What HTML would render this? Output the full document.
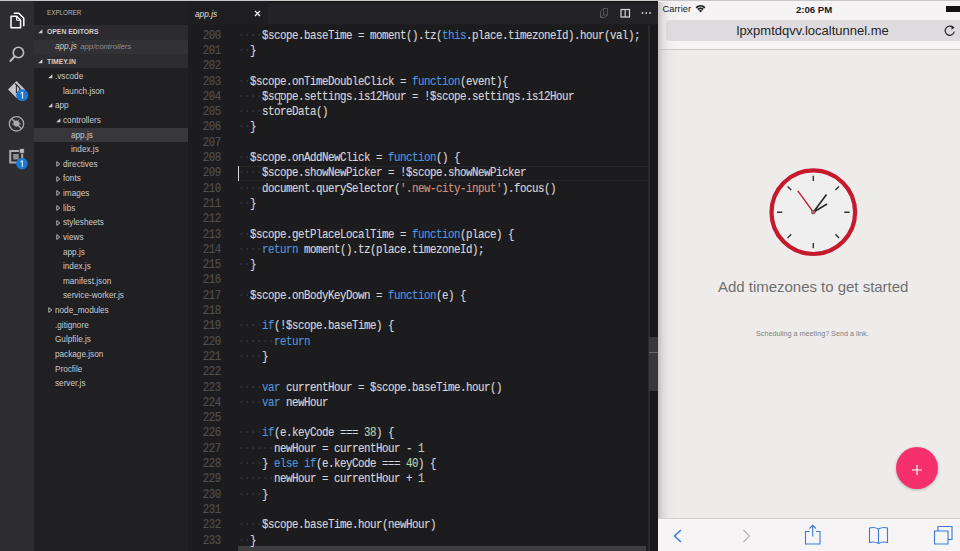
<!DOCTYPE html>
<html><head><meta charset="utf-8">
<style>
*{margin:0;padding:0;box-sizing:border-box}
html,body{width:960px;height:551px;overflow:hidden;background:#1e1e20;font-family:"Liberation Sans",sans-serif}
.a{position:absolute}
#top{left:0;top:0;width:960px;height:1.2px;background:#c8c7c7}
#act{left:0;top:1.2px;width:34px;height:549.5px;background:#2d2c2f}
#side{left:34px;top:1.2px;width:154px;height:549.5px;background:#201f22}
#oe{left:34px;top:24.8px;width:154px;height:15.2px;background:#2b2a2e}
#oei{left:34px;top:40px;width:154px;height:13.6px;background:#323136}
#th{left:34px;top:53.6px;width:154px;height:14.7px;background:#2d2c30}
#sel{left:34px;top:127.5px;width:154px;height:14.5px;background:#38373b}
#tabs{left:188px;top:1.2px;width:470px;height:23.3px;background:#232226}
#tab{left:188px;top:1.2px;width:79px;height:23.3px;background:#1e1d20}
#ed{left:188px;top:24.5px;width:470px;height:527px;background:#1c1b1e}
#vs{left:648px;top:24.5px;width:10px;height:527px;background:#19181b;border-left:2px solid #2a292c}
#vthumb{left:648.5px;top:337px;width:9.5px;height:54px;background:#38373a}
#vline{left:648.5px;top:351.5px;width:9.5px;height:1.5px;background:#67666a}
#hthumb{left:238px;top:545.5px;width:407.5px;height:6px;background:#3d3c40}
#ios{left:658px;top:1.2px;width:302px;height:549.5px;background:#eeeceb}
#ios-shadow{left:658px;top:2px;width:20px;height:549px;background:linear-gradient(90deg,rgba(180,178,178,0.75) 0,rgba(200,198,198,0.45) 5px,rgba(215,213,213,0.2) 11px,rgba(235,233,232,0) 20px)}
#status{left:658px;top:1.2px;width:302px;height:48.5px;background:#f5f3f4;border-bottom:1px solid #c9c8c9}
#url{left:666px;top:20px;width:294px;height:21px;background:#dddbde;border-radius:4px 0 0 4px}
#bar{left:658px;top:518px;width:302px;height:33px;background:#f6f4f5;border-top:1px solid #d3d1d1}
.st{position:absolute;font-size:8.2px;color:#cbcbcb;white-space:nowrap;line-height:normal}
.tri-d{position:absolute;width:0;height:0;border-left:4px solid transparent;border-bottom:4px solid #c8c8c8}
.tri-r{position:absolute;width:0;height:0;border-top:3px solid transparent;border-bottom:3px solid transparent;border-left:3.5px solid #c8c8c8}
.hd{position:absolute;font-size:7.2px;font-weight:bold;color:#cfcfcf;white-space:nowrap;letter-spacing:0;transform:scaleX(0.95);transform-origin:0 0}
.code{position:absolute;left:238px;font-family:"Liberation Mono",monospace;font-size:10.8px;letter-spacing:-0.48px;color:#d4d4d4;white-space:pre;line-height:13.661px;height:15px;-webkit-text-stroke:0.15px currentColor;transform:scaleY(1.1);transform-origin:0 0}
.ln{position:absolute;left:186.3px;width:34.5px;text-align:right;font-family:"Liberation Mono",monospace;font-size:10.8px;letter-spacing:-0.48px;color:#4f4f4f;line-height:13.661px;height:15px;-webkit-text-stroke:0.15px currentColor;transform:scaleY(1.1);transform-origin:0 0}
.k{color:#4f94d8}.s{color:#ce9178}.n{color:#b5cea8}.w{color:#3a3a3a;-webkit-text-stroke:0}
</style></head><body>
<div class="a" id="top"></div>
<div class="a" id="act"></div>
<div class="a" id="side"></div>
<div class="a" id="oe"></div>
<div class="a" id="oei"></div>
<div class="a" id="th"></div>
<div class="a" id="sel"></div>
<div class="a" id="tabs"></div>
<div class="a" id="tab"></div>
<div class="a" style="left:267px;top:1.2px;width:391px;height:2px;background:#19181b"></div>
<div class="a" style="left:267px;top:4px;width:1px;height:20px;background:#1f1e21"></div>
<div class="a" id="ed"></div>
<div class="a" id="vs"></div>
<div class="a" id="vthumb"></div>
<div class="a" id="vline"></div>
<div class="a" id="hthumb"></div>
<div class="a" id="ios"></div>
<div class="a" id="status"></div>
<div class="a" id="url"></div>
<div class="a" id="ios-shadow"></div>
<div class="a" id="bar"></div>

<!-- activity bar icons -->
<svg class="a" style="left:0;top:2px" width="34" height="180" viewBox="0 2 34 180">
  <!-- files -->
  <g fill="none" stroke="#ffffff" stroke-width="1.5" stroke-linejoin="round">
    <path d="M13.8 13.2 h5 l5 5 v8" />
    <path d="M11 16.2 h5.6 l4 4 v7.6 h-9.6 z" />
    <path d="M16.6 16.2 v4 h4" stroke-width="1"/>
  </g>
  <!-- search -->
  <g fill="none" stroke="#bdbdbd" stroke-width="1.6">
    <circle cx="18.4" cy="52.5" r="5.2"/>
    <path d="M14.8 56.2 L9.8 61.6" stroke-width="2"/>
  </g>
  <!-- git -->
  <path d="M16.5 81 L25 89.5 L16.5 98 L8 89.5 Z" fill="#c4c4c4"/>
  <path d="M15.2 83.5 L19.8 88.1 M16.4 84.5 V93" stroke="#2d2c2f" stroke-width="1.1"/><circle cx="19.8" cy="89" r="1" fill="#2d2c2f"/>
  <circle cx="22.2" cy="95.2" r="6" fill="#1a7ad8"/>
  <path d="M20.6 93.4 L22.6 92 V98.6" fill="none" stroke="#fff" stroke-width="1"/>
  <!-- debug -->
  <g fill="none" stroke="#a9a9a9" stroke-width="1.3">
    <circle cx="16.5" cy="123.8" r="7.2"/>
    <path d="M11.5 118.8 L21.5 128.8"/>
  </g>
  <path d="M13.5 122.5 q3-4 6 0 v2.5 q-3 3.5-6 0z" fill="#a9a9a9"/>
  <path d="M14 119.5 l1.2 1.5 M19 119.5 l-1.2 1.5 M12 124 h1.5 M19.5 124 h1.5" stroke="#a9a9a9" stroke-width="0.9"/>
  <!-- extensions -->
  <path d="M10.2 151 h12 v11.5 h-12 z" fill="none" stroke="#ababab" stroke-width="2"/>
  <rect x="13.2" y="154" width="5.5" height="5.5" fill="#8f8f8f"/>
  <rect x="19.5" y="148.5" width="4.8" height="4.8" fill="#bdbdbd" stroke="#2d2c2f" stroke-width="0.8"/>
  <circle cx="21.9" cy="163.6" r="5.8" fill="#1a7ad8"/>
  <path d="M20.4 162 L22.3 160.6 V166.9" fill="none" stroke="#fff" stroke-width="1"/>
</svg>

<!-- sidebar headers -->
<div class="hd" style="left:46.5px;top:8.2px;font-weight:normal;color:#bcbcbc;font-size:7.6px;letter-spacing:0;transform:scaleX(0.83);transform-origin:0 0">EXPLORER</div>
<svg class="a" style="left:38.3px;top:29.2px" width="5" height="5"><path d="M4.4 0.2 V4.3 H0.2 Z" fill="#d0d0d0"/></svg>
<div class="hd" style="left:46.7px;top:27.1px">OPEN EDITORS</div>
<div class="st" style="left:55px;top:42.4px;font-style:italic;color:#c9c9c9">app.js <span style="color:#8d8d8f;font-size:7.8px;margin-left:1px">app/controllers</span></div>
<svg class="a" style="left:38.3px;top:58.7px" width="5" height="5"><path d="M4.4 0.2 V4.3 H0.2 Z" fill="#d0d0d0"/></svg>
<div class="hd" style="left:46.7px;top:56.9px">TIMEY.IN</div>
<div class="st" style="left:55px;top:71.98px">.vscode</div>
<svg class="a" style="left:47.70px;top:74.20px" width="5" height="5"><path d="M4.4 0.2 V4.3 H0.2 Z" fill="#d0d0d0"/></svg>
<div class="st" style="left:63px;top:86.61px">launch.json</div>
<div class="st" style="left:55px;top:101.24px">app</div>
<svg class="a" style="left:47.70px;top:103.46px" width="5" height="5"><path d="M4.4 0.2 V4.3 H0.2 Z" fill="#d0d0d0"/></svg>
<div class="st" style="left:63px;top:115.87px">controllers</div>
<svg class="a" style="left:55.70px;top:118.09px" width="5" height="5"><path d="M4.4 0.2 V4.3 H0.2 Z" fill="#d0d0d0"/></svg>
<div class="st" style="left:71px;top:130.50px">app.js</div>
<div class="st" style="left:71px;top:145.13px">index.js</div>
<div class="st" style="left:63px;top:159.76px">directives</div>
<svg class="a" style="left:55.70px;top:161.18px" width="5" height="6"><path d="M0.8 0.6 L3.8 3 L0.8 5.4 Z" fill="none" stroke="#c4c4c4" stroke-width="0.9"/></svg>
<div class="st" style="left:63px;top:174.39px">fonts</div>
<svg class="a" style="left:55.70px;top:175.81px" width="5" height="6"><path d="M0.8 0.6 L3.8 3 L0.8 5.4 Z" fill="none" stroke="#c4c4c4" stroke-width="0.9"/></svg>
<div class="st" style="left:63px;top:189.02px">images</div>
<svg class="a" style="left:55.70px;top:190.44px" width="5" height="6"><path d="M0.8 0.6 L3.8 3 L0.8 5.4 Z" fill="none" stroke="#c4c4c4" stroke-width="0.9"/></svg>
<div class="st" style="left:63px;top:203.65px">libs</div>
<svg class="a" style="left:55.70px;top:205.07px" width="5" height="6"><path d="M0.8 0.6 L3.8 3 L0.8 5.4 Z" fill="none" stroke="#c4c4c4" stroke-width="0.9"/></svg>
<div class="st" style="left:63px;top:218.28px">stylesheets</div>
<svg class="a" style="left:55.70px;top:219.70px" width="5" height="6"><path d="M0.8 0.6 L3.8 3 L0.8 5.4 Z" fill="none" stroke="#c4c4c4" stroke-width="0.9"/></svg>
<div class="st" style="left:63px;top:232.91px">views</div>
<svg class="a" style="left:55.70px;top:234.33px" width="5" height="6"><path d="M0.8 0.6 L3.8 3 L0.8 5.4 Z" fill="none" stroke="#c4c4c4" stroke-width="0.9"/></svg>
<div class="st" style="left:63px;top:247.54px">app.js</div>
<div class="st" style="left:63px;top:262.17px">index.js</div>
<div class="st" style="left:63px;top:276.80px">manifest.json</div>
<div class="st" style="left:63px;top:291.43px">service-worker.js</div>
<div class="st" style="left:55px;top:306.06px">node_modules</div>
<svg class="a" style="left:47.70px;top:307.48px" width="5" height="6"><path d="M0.8 0.6 L3.8 3 L0.8 5.4 Z" fill="none" stroke="#c4c4c4" stroke-width="0.9"/></svg>
<div class="st" style="left:55px;top:320.69px">.gitignore</div>
<div class="st" style="left:55px;top:335.32px">Gulpfile.js</div>
<div class="st" style="left:55px;top:349.95px">package.json</div>
<div class="st" style="left:55px;top:364.58px">Procfile</div>
<div class="st" style="left:55px;top:379.21px">server.js</div>

<!-- tab -->
<div class="st" style="left:195px;top:8.7px;font-style:italic;font-size:8.3px;color:#e0e0e0">app.js</div>
<svg class="a" style="left:254px;top:10px" width="7" height="7"><path d="M1 1 L6 6 M6 1 L1 6" stroke="#f0f0f0" stroke-width="1.3"/></svg>
<!-- editor actions -->
<svg class="a" style="left:598px;top:6px" width="60" height="14" viewBox="598 6 60 14">
  <path d="M600.5 11 l3-2.5 h4 v6.5 l-3 2.5 h-4z M603.5 8.5 v6.5 l-3 2.5 M603.5 15 h4" fill="none" stroke="#5a5a5a" stroke-width="0.9"/>
  <rect x="621" y="9.5" width="8.5" height="7.5" fill="none" stroke="#d5d5d5" stroke-width="1.2"/>
  <path d="M625.2 9.5 v7.5" stroke="#d5d5d5" stroke-width="1.2"/>
  <circle cx="642.5" cy="13" r="0.9" fill="#d0d0d0"/><circle cx="646.3" cy="13" r="0.9" fill="#d0d0d0"/><circle cx="650" cy="13" r="0.9" fill="#d0d0d0"/>
</svg>

<!-- cursor line -->
<div class="a" style="left:239px;top:165.5px;width:409px;height:15.3px;border-top:1px solid #262528;border-bottom:1px solid #262528"></div>
<div class="a" style="left:238px;top:165.5px;width:1.3px;height:15.3px;background:#d8d8d8"></div>

<div class="ln" style="top:28.60px">200</div>
<div class="ln" style="top:43.90px">201</div>
<div class="ln" style="top:59.20px">202</div>
<div class="ln" style="top:74.50px">203</div>
<div class="ln" style="top:89.80px">204</div>
<div class="ln" style="top:105.10px">205</div>
<div class="ln" style="top:120.40px">206</div>
<div class="ln" style="top:135.70px">207</div>
<div class="ln" style="top:151.00px">208</div>
<div class="ln" style="top:166.30px">209</div>
<div class="ln" style="top:181.60px">210</div>
<div class="ln" style="top:196.90px">211</div>
<div class="ln" style="top:212.20px">212</div>
<div class="ln" style="top:227.50px">213</div>
<div class="ln" style="top:242.80px">214</div>
<div class="ln" style="top:258.10px">215</div>
<div class="ln" style="top:273.40px">216</div>
<div class="ln" style="top:288.70px">217</div>
<div class="ln" style="top:304.00px">218</div>
<div class="ln" style="top:319.30px">219</div>
<div class="ln" style="top:334.60px">220</div>
<div class="ln" style="top:349.90px">221</div>
<div class="ln" style="top:365.20px">222</div>
<div class="ln" style="top:380.50px">223</div>
<div class="ln" style="top:395.80px">224</div>
<div class="ln" style="top:411.10px">225</div>
<div class="ln" style="top:426.40px">226</div>
<div class="ln" style="top:441.70px">227</div>
<div class="ln" style="top:457.00px">228</div>
<div class="ln" style="top:472.30px">229</div>
<div class="ln" style="top:487.60px">230</div>
<div class="ln" style="top:502.90px">231</div>
<div class="ln" style="top:518.20px">232</div>
<div class="ln" style="top:533.50px">233</div>

<div class="code" style="top:28.60px"><span class="w">····</span>$scope.baseTime = moment().tz(<span class="k">this</span>.place.timezoneId).hour(val);</div>
<div class="code" style="top:43.90px"><span class="w">··</span>}</div>
<div class="code" style="top:59.20px"> </div>
<div class="code" style="top:74.50px"><span class="w">··</span>$scope.onTimeDoubleClick = <span class="k">function</span>(event){</div>
<div class="code" style="top:89.80px"><span class="w">····</span>$scope.settings.is12Hour = !$scope.settings.is12Hour</div>
<div class="code" style="top:105.10px"><span class="w">····</span>storeData()</div>
<div class="code" style="top:120.40px"><span class="w">··</span>}</div>
<div class="code" style="top:135.70px"> </div>
<div class="code" style="top:151.00px"><span class="w">··</span>$scope.onAddNewClick = <span class="k">function</span>() {</div>
<div class="code" style="top:166.30px"><span class="w">····</span>$scope.showNewPicker = !$scope.showNewPicker</div>
<div class="code" style="top:181.60px"><span class="w">····</span>document.querySelector(<span class="s">'.new-city-input'</span>).focus()</div>
<div class="code" style="top:196.90px"><span class="w">··</span>}</div>
<div class="code" style="top:212.20px"> </div>
<div class="code" style="top:227.50px"><span class="w">··</span>$scope.getPlaceLocalTime = <span class="k">function</span>(place) {</div>
<div class="code" style="top:242.80px"><span class="w">····</span><span class="k">return</span> moment().tz(place.timezoneId);</div>
<div class="code" style="top:258.10px"><span class="w">··</span>}</div>
<div class="code" style="top:273.40px"> </div>
<div class="code" style="top:288.70px"><span class="w">··</span>$scope.onBodyKeyDown = <span class="k">function</span>(e) {</div>
<div class="code" style="top:304.00px"> </div>
<div class="code" style="top:319.30px"><span class="w">····</span><span class="k">if</span>(!$scope.baseTime) {</div>
<div class="code" style="top:334.60px"><span class="w">······</span><span class="k">return</span></div>
<div class="code" style="top:349.90px"><span class="w">····</span>}</div>
<div class="code" style="top:365.20px"> </div>
<div class="code" style="top:380.50px"><span class="w">····</span><span class="k">var</span> currentHour = $scope.baseTime.hour()</div>
<div class="code" style="top:395.80px"><span class="w">····</span><span class="k">var</span> newHour</div>
<div class="code" style="top:411.10px"> </div>
<div class="code" style="top:426.40px"><span class="w">····</span><span class="k">if</span>(e.keyCode === <span class="n">38</span>) {</div>
<div class="code" style="top:441.70px"><span class="w">······</span>newHour = currentHour - <span class="n">1</span></div>
<div class="code" style="top:457.00px"><span class="w">····</span>} <span class="k">else if</span>(e.keyCode === <span class="n">40</span>) {</div>
<div class="code" style="top:472.30px"><span class="w">······</span>newHour = currentHour + <span class="n">1</span></div>
<div class="code" style="top:487.60px"><span class="w">····</span>}</div>
<div class="code" style="top:502.90px"> </div>
<div class="code" style="top:518.20px"><span class="w">····</span>$scope.baseTime.hour(newHour)</div>
<div class="code" style="top:533.50px"><span class="w">··</span>}</div>

<!-- I-beam mouse cursor -->
<svg class="a" style="left:276px;top:92px;z-index:5" width="9" height="14"><path d="M1.5 1.5 h4.5 M3.75 1.5 v10.5 M1.5 12 h4.5" stroke="#111" stroke-width="2.2"/><path d="M1.5 1.5 h4.5 M3.75 1.5 v10.5 M1.5 12 h4.5" stroke="#dcdcdc" stroke-width="1"/></svg>

<!-- iOS status -->
<div class="st" style="left:662.6px;top:4.2px;font-size:9.3px;color:#222">Carrier</div>
<svg class="a" style="left:695px;top:4px" width="11" height="9" viewBox="0 0 11 9">
  <path d="M5.5 8.5 L0.5 3 A7.5 7.5 0 0 1 10.5 3 Z" fill="#1e1e1e"/>
  <path d="M2.1 4.6 A5 5 0 0 1 8.9 4.6" fill="none" stroke="#f5f3f4" stroke-width="0.9"/>
  <path d="M3.6 6.3 A3 3 0 0 1 7.4 6.3" fill="none" stroke="#f5f3f4" stroke-width="0.9"/>
</svg>
<div class="st" style="left:796px;top:3.5px;font-size:9.6px;font-weight:bold;color:#1a1a1a">2:06 PM</div>
<div class="a" style="left:946px;top:5.5px;width:14px;height:6.5px;background:#111"></div>
<div class="st" style="left:736.5px;top:22.5px;font-size:13px;color:#262626">lpxpmtdqvv.localtunnel.me</div>
<svg class="a" style="left:943px;top:23px" width="14" height="14" viewBox="0 0 14 14">
  <path d="M10.5 5 A4.6 4.6 0 1 0 11.3 8.5" fill="none" stroke="#2a2a2a" stroke-width="1.2"/>
  <path d="M8.3 2.2 L11.6 4.6 L8.6 6.8 z" fill="#2a2a2a"/>
</svg>

<!-- clock -->
<svg class="a" style="left:766px;top:165px" width="96" height="96" viewBox="766 165 96 96">
  <circle cx="813.3" cy="212.2" r="41.8" fill="#f0efef" stroke="#c51a2c" stroke-width="4.2"/>
  <g stroke="#333" stroke-width="1.4">
    <path d="M813.3 175.8 v5.3 M813.3 243 v5.3 M777 212.2 h5.3 M844.3 212.2 h5.3"/>
    <path d="M787.6 186.5 l3.6 3.6 M835.4 234.3 l3.6 3.6 M839 186.5 l-3.6 3.6 M787.6 237.9 l3.6 -3.6"/>
  </g>
  <path d="M813.3 212.2 L797.8 190.8" stroke="#c51a2c" stroke-width="1.4"/>
  <path d="M813.3 212.2 L826.5 194.5 M813.3 212.2 L827 204" stroke="#2b2b2b" stroke-width="1.7"/>
  <circle cx="813.3" cy="212.2" r="1.9" fill="#c0606a" stroke="#555" stroke-width="0.6"/>
</svg>
<div class="st" style="left:718px;top:277.8px;font-size:15px;color:#707070;letter-spacing:-0.02px">Add timezones to get started</div>
<div class="st" style="left:756px;top:328.5px;font-size:7.2px;color:#808080">Scheduling a meeting? Send a link.</div>

<!-- FAB -->
<div class="a" style="left:896px;top:447px;width:42px;height:42px;border-radius:50%;background:#f6306c;box-shadow:0 1px 3px rgba(0,0,0,0.25)"></div>
<svg class="a" style="left:911px;top:464px" width="12" height="12"><path d="M6 1 v10 M1 6 h10" stroke="#fff" stroke-width="1.2"/></svg>

<!-- bottom toolbar icons -->
<svg class="a" style="left:658px;top:518px" width="302" height="33" viewBox="658 518 302 33">
  <path d="M681 530 L674.5 536 L681 542" fill="none" stroke="#3a7ad6" stroke-width="1.6"/>
  <path d="M743.5 530 L749.5 536 L743.5 542" fill="none" stroke="#b8b8bc" stroke-width="1.3"/>
  <g fill="none" stroke="#3a7ad6" stroke-width="1.1">
    <path d="M809.5 531.5 h-4 v12.5 h14.5 v-12.5 h-4"/>
    <path d="M812.7 536.5 v-11 M809.5 528.5 l3.2-3.2 l3.2 3.2"/>
    <path d="M878.5 529 q-4.5-2.5-9 -1 v14.5 q4.5-1.5 9 1 q4.5-2.5 9-1 v-14.5 q-4.5-1.5-9 1 v14.5"/>
    <path d="M934.5 531 h13.5 v13 h-13.5z"/>
    <path d="M938 531 v-4.5 h14 v13 h-4"/>
  </g>
</svg>
</body></html>
